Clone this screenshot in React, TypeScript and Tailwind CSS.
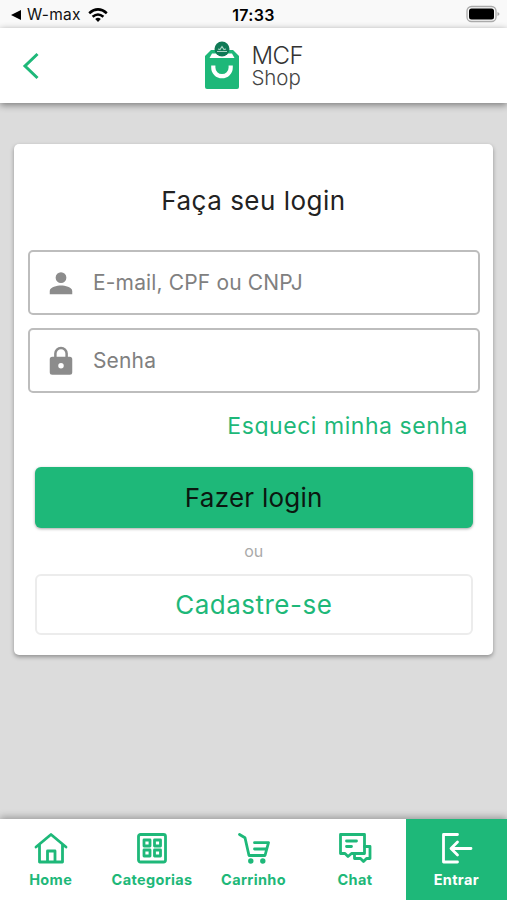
import type { ReactNode } from "react";
import clsx from "clsx";

function StatusBar() {
  return (
    <div className="relative flex h-7 items-center bg-[#f9f9f9] pt-0.5">
      <svg className="ml-[10px] h-3 w-3" viewBox="0 0 12 12">
        <path d="M1 6 11 1v10z" fill="#000" />
      </svg>
      <span className="ml-[5px] w-[55px] whitespace-nowrap text-[15.5px] tracking-[0.3px] text-[#111]">W-max</span>
      <svg className="ml-[6px] h-[15px] w-5" viewBox="0 0 20 15" fill="none" stroke="#000" strokeWidth="2.6">
        <path d="M1.2 5.2Q10-2.4 18.8 5.2" />
        <path d="M4.6 8.8Q10 4.2 15.4 8.8" />
        <path d="M7.2 11Q10 8.7 12.8 11L10 14z" fill="#000" stroke="none" />
      </svg>
      <span className="absolute inset-x-0 text-center text-[16px] font-semibold tracking-[0.3px] text-black">17:33</span>
      <svg className="absolute right-[7px] top-[5px] h-[18px] w-[34px]" viewBox="0 0 34 18">
        <rect x="1" y="1.5" width="29" height="15" rx="4.5" fill="none" stroke="#aaa" strokeWidth="1.3" />
        <rect x="3" y="3.5" width="25" height="11" rx="2.5" fill="#000" />
        <path d="M31.5 7v4q2-.8 2-2t-2-2z" fill="#aaa" />
      </svg>
    </div>
  );
}

function Header() {
  return (
    <header className="relative flex h-[75px] items-center justify-center bg-white shadow-[0_2px_7px_rgba(0,0,0,0.45)]">
      <svg className="absolute left-[20px] top-[23.5px] h-7 w-5" viewBox="0 0 20 28" fill="none" stroke="#1eb879" strokeWidth="3">
        <path d="M17.500 2 5 14l12.500 12" />
      </svg>
      <svg className="mb-px mr-[12px] h-[50px] w-9" viewBox="0 0 36 50">
        <path d="M7 10h22l6 6v31q0 2-2 2H3q-2 0-2-2V16z" fill="#1eb879" />
        <path d="M8 13.500h20l2.500 4.500h-25z" fill="#fff" />
        <circle cx="18" cy="9" r="7.5" fill="#107a56" />
        <path d="M13 11.500h10M14 9l2 .5 2-3 2 3 2-.5" fill="none" stroke="#a9d4c4" strokeWidth="1.2" />
        <path d="M9.3 25.500v2a8.700 8.700 0 0 0 17.400 0v-2" fill="none" stroke="#fff" strokeWidth="4.200" />
      </svg>
      <div className="w-[52px] pt-[2px]">
        <div className="text-[24px] font-light leading-[22px] tracking-[-0.6px] text-[#333]">MCF</div>
        <div className="text-[20.5px] font-light leading-[22px] tracking-[-0.1px] text-[#444]">Shop</div>
      </div>
    </header>
  );
}

function Field({ type, placeholder, icon }: { type: string; placeholder: string; icon: ReactNode }) {
  return (
    <label className="flex h-[65px] w-[452px] items-center rounded-[5px] border-2 border-[#bdbdbd] pl-[15.5px]">
      <svg className="h-[30px] w-[30px] shrink-0" viewBox="0 0 24 24" fill="#8c8c8c">
        {icon}
      </svg>
      <input
        type={type}
        placeholder={placeholder}
        className="ml-[17.5px] min-w-0 flex-1 bg-transparent text-[21px] tracking-[0.15px] outline-none placeholder:text-[#808080]"
      />
    </label>
  );
}

interface NavItem {
  label: string;
  icon: ReactNode;
  active?: boolean;
}

const navItems: NavItem[] = [
  {
    label: "Home",
    icon: <path d="M2 15 17 2.500 32 15M5.500 13v17h23V13M13.500 29.500V19h7.500v10.500" />,
  },
  {
    label: "Categorias",
    icon: (
      <>
        <rect x="3.500" y="2.500" width="27" height="27.500" rx="2" />
        <path d="M9 8h6v6H9zM19.500 8h6v6h-6zM9 18h6v6H9zM19.500 18h6v6h-6z" />
      </>
    ),
  },
  {
    label: "Carrinho",
    icon: (
      <>
        <path d="M3.500 2.500 9 5.700 13 23.500h16l3.500-12.800h-14M18.500 17h11" />
        <circle cx="14.800" cy="29" r="1.300" fill="currentColor" />
        <circle cx="26.800" cy="29" r="1.300" fill="currentColor" />
      </>
    ),
  },
  {
    label: "Chat",
    icon: (
      <>
        <path d="M2.500 2.500h24v19H13.500l-3.500 3-3-3H2.500zM8.500 9h10M8.500 14.500h5" />
        <path d="M26.500 14.500h5.500v12h-3.500L25.500 29.500l-3-3h-6v-5" />
      </>
    ),
  },
  {
    label: "Entrar",
    active: true,
    icon: <path d="M18.500 2.500H4.500v27.500h14M32 16.500H12.500M18.500 10l-6.500 6.500 6.500 6.500" />,
  },
];

function BottomNav() {
  return (
    <nav className="relative grid h-[81px] grid-cols-5 bg-white shadow-[0_-2px_7px_rgba(0,0,0,0.3)]">
      {navItems.map(({ label, icon, active }) => (
        <a
          key={label}
          className={clsx(
            "flex flex-col items-center pt-[13px] text-[14.5px] font-bold leading-5 tracking-[0.35px]",
            active ? "bg-[#1eb879] text-white" : "text-[#1eb879]",
          )}
        >
          <svg className="mb-[6px] h-8 w-[34px]" viewBox="0 0 34 32" fill="none" stroke="currentColor" strokeWidth="2.8" strokeLinecap="round" strokeLinejoin="round">
            {icon}
          </svg>
          {label}
        </a>
      ))}
    </nav>
  );
}

export default function App() {
  return (
    <div className="flex h-[900px] w-full flex-col overflow-hidden bg-[#dcdcdc] font-['Inter',sans-serif]">
      <StatusBar />
      <Header />
      <main className="flex-1 px-[14px] pt-[41px]">
        <section className="h-[511px] rounded-[5px] bg-white px-[14px] pt-[39px] shadow-[0_2px_4px_rgba(0,0,0,0.35)]">
          <h1 className="mb-[31px] text-center text-[26px] leading-9 tracking-[0.5px] text-[#222]">Faça seu login</h1>
          <div className="flex flex-col gap-[13px]">
            <Field
              type="text"
              placeholder="E-mail, CPF ou CNPJ"
              icon={<path d="M12 12a4.300 4.300 0 1 0 0-8.600A4.300 4.300 0 0 0 12 12zm0 2c-3 0-9 1.300-9 4.300V21h18v-2.700c0-3-6-4.300-9-4.300z" />}
            />
            <Field
              type="password"
              placeholder="Senha"
              icon={<path d="M18.500 8.500H17.500V6a5.500 5.500 0 0 0-11 0v2.500H5a2 2 0 0 0-2 2V21a2 2 0 0 0 2 2h14a2 2 0 0 0 2-2V10.500a2 2 0 0 0-2-2zM12 18a2.200 2.200 0 1 1 0-4.400 2.200 2.200 0 0 1 0 4.400zM15.500 8.500h-7V6a3.500 3.500 0 0 1 7 0z" />}
            />
          </div>
          {/* the line box is tight, so the descender of the q is cut off */}
          <a className="ml-auto mr-[11px] mt-[20px] block h-[23px] w-fit overflow-hidden text-[23px] leading-[26px] tracking-[0.55px] text-[#1eb879]">
            Esqueci minha senha
          </a>
          <div className="mt-[31px] flex flex-col pl-[6.5px] pr-[6px] text-[26px]">
            <button className="h-[61px] rounded-[6px] bg-[#1eb879] tracking-[0.25px] text-[#0b1710] shadow-[0_1px_3px_rgba(0,0,0,0.35)]">
              Fazer login
            </button>
            <span className="pb-3 pt-[13px] text-center text-[16px] leading-[21px] text-[#aaa]">ou</span>
            <button className="h-[61px] rounded-[6px] border-2 border-[#ececec] tracking-[0.5px] text-[#1eb879]">
              Cadastre-se
            </button>
          </div>
        </section>
      </main>
      <BottomNav />
    </div>
  );
}
